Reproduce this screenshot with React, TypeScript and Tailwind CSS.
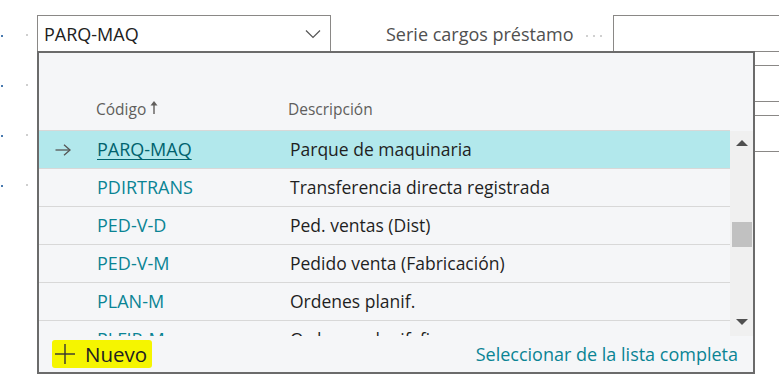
import React from "react";

const rows = [
  { code: "PARQ-MAQ", desc: "Parque de maquinaria", selected: true },
  { code: "PDIRTRANS", desc: "Transferencia directa registrada" },
  { code: "PED-V-D", desc: "Ped. ventas (Dist)" },
  { code: "PED-V-M", desc: "Pedido venta (Fabricación)" },
  { code: "PLAN-M", desc: "Ordenes planif." },
  { code: "PLFIR-M", desc: "Ordenes planif. firmes" },
];

function FormRow({ first, rightInput }: { first?: boolean; rightInput: boolean }) {
  return (
    <div className="flex h-[37px]">
      <div className="w-[37px] relative flex items-center">
        <span className="ml-[1px] mt-[5px] w-[2px] h-[2px] bg-[#4a7bb0]" />
        <span className="ml-[23px] mt-[2px] w-[2px] h-[2px] bg-[#cfcfcf]" />
      </div>
      <div className="w-[294px] border border-[#8a8886] bg-white flex items-center justify-between pl-[6px] pr-[9px]">
        {first && (
          <>
            <span className="text-[18px] text-[#212121] leading-none">PARQ-MAQ</span>
            <svg width="16" height="10" viewBox="0 0 16 10" className="mt-[1px]">
              <polyline points="1,1.5 8,8.5 15,1.5" fill="none" stroke="#555" strokeWidth="1.2" />
            </svg>
          </>
        )}
      </div>
      <div className="w-[282px] flex items-center pl-[55px]">
        {first && (
          <>
            <span className="text-[18px] text-[#505050] leading-none">Serie cargos préstamo</span>
            <span className="ml-[13px] mt-[4px] flex gap-[5px]">
              <span className="w-[2px] h-[2px] bg-[#d0d0d0]" />
              <span className="w-[2px] h-[2px] bg-[#d0d0d0]" />
              <span className="w-[2px] h-[2px] bg-[#d0d0d0]" />
            </span>
          </>
        )}
      </div>
      {rightInput ? (
        <div className="flex-1 border border-r-0 border-[#8a8886] bg-white" />
      ) : (
        <div className="flex-1" />
      )}
    </div>
  );
}

export default function App() {
  return (
    <div className="relative w-[779px] h-[379px] bg-white overflow-hidden font-['Open_Sans',sans-serif]">
      <div className="flex flex-col pt-[15px] gap-[13px]">
        <FormRow first rightInput />
        <FormRow rightInput />
        <FormRow rightInput />
        <FormRow rightInput={false} />
      </div>

      <div className="absolute left-[37px] top-[51px] w-[718px] h-[323px] border-2 border-[#6b6b6b] bg-[#f5f6f8] flex flex-col">
        <div className="h-[78px] flex items-end pb-[13px] border-b border-[#d8d8d8] mr-[23px] text-[15.5px] text-[#605e5c]">
          <div className="w-[57px]" />
          <div className="w-[192px] flex items-center">
            <span className="leading-none">Código</span>
            <svg width="8" height="13" viewBox="0 0 8 13" className="ml-[4px] -mt-[3px]">
              <polygon points="4,0 7.5,4.5 0.5,4.5" fill="#605e5c" />
              <line x1="4" y1="3" x2="4" y2="13" stroke="#605e5c" strokeWidth="1.4" />
            </svg>
          </div>
          <span className="leading-none">Descripción</span>
        </div>

        <div className="h-[205px] flex overflow-hidden">
          <div className="flex-1 flex flex-col overflow-hidden">
            {rows.map((r) => (
              <div
                key={r.code}
                className={`shrink-0 h-[38px] flex items-center border-b border-[#d8d8d8] text-[17.5px] ${
                  r.selected ? "bg-[#b2e8ec]" : ""
                }`}
              >
                <div className="w-[58px] pl-[16px] flex items-center">
                  {r.selected && (
                    <svg width="16" height="12" viewBox="0 0 16 12">
                      <line x1="0.5" y1="6" x2="15" y2="6" stroke="#555" strokeWidth="1.3" />
                      <polyline points="9,0.8 15,6 9,11.2" fill="none" stroke="#555" strokeWidth="1.3" />
                    </svg>
                  )}
                </div>
                <div className="w-[193px]">
                  <span
                    className={
                      r.selected
                        ? "text-[18px] text-[#00626e] underline underline-offset-[3px] decoration-1"
                        : "text-[18px] text-[#0a8494]"
                    }
                  >
                    {r.code}
                  </span>
                </div>
                <span className="text-[#1f1f1f]">{r.desc}</span>
              </div>
            ))}
          </div>
          <div className="w-[23px] bg-[#f0f0f0] relative">
            <svg width="12" height="7" viewBox="0 0 12 7" className="absolute left-[6px] top-[9px]">
              <polygon points="6,0 12,6 0,6" fill="#505050" />
            </svg>
            <div className="absolute left-[2px] top-[91px] w-[20px] h-[25px] bg-[#c1c1c1]" />
            <svg width="12" height="7" viewBox="0 0 12 7" className="absolute left-[6px] top-[188px]">
              <polygon points="0,0 12,0 6,6" fill="#505050" />
            </svg>
          </div>
        </div>

        <div className="flex-1 flex items-center justify-between pl-[13px] pr-[15px]">
          <div className="flex items-center h-[28px] w-[100px] bg-[#f5f500] rounded-[3px] pl-[3px]">
            <svg width="20" height="20" viewBox="0 0 20 20">
              <line x1="10" y1="0" x2="10" y2="20" stroke="#333" strokeWidth="1.4" />
              <line x1="0" y1="10" x2="20" y2="10" stroke="#333" strokeWidth="1.4" />
            </svg>
            <span className="ml-[10px] text-[20.5px] text-[#212121] leading-none">Nuevo</span>
          </div>
          <span className="text-[18px] text-[#0a8494] leading-none">Seleccionar de la lista completa</span>
        </div>
      </div>
    </div>
  );
}
